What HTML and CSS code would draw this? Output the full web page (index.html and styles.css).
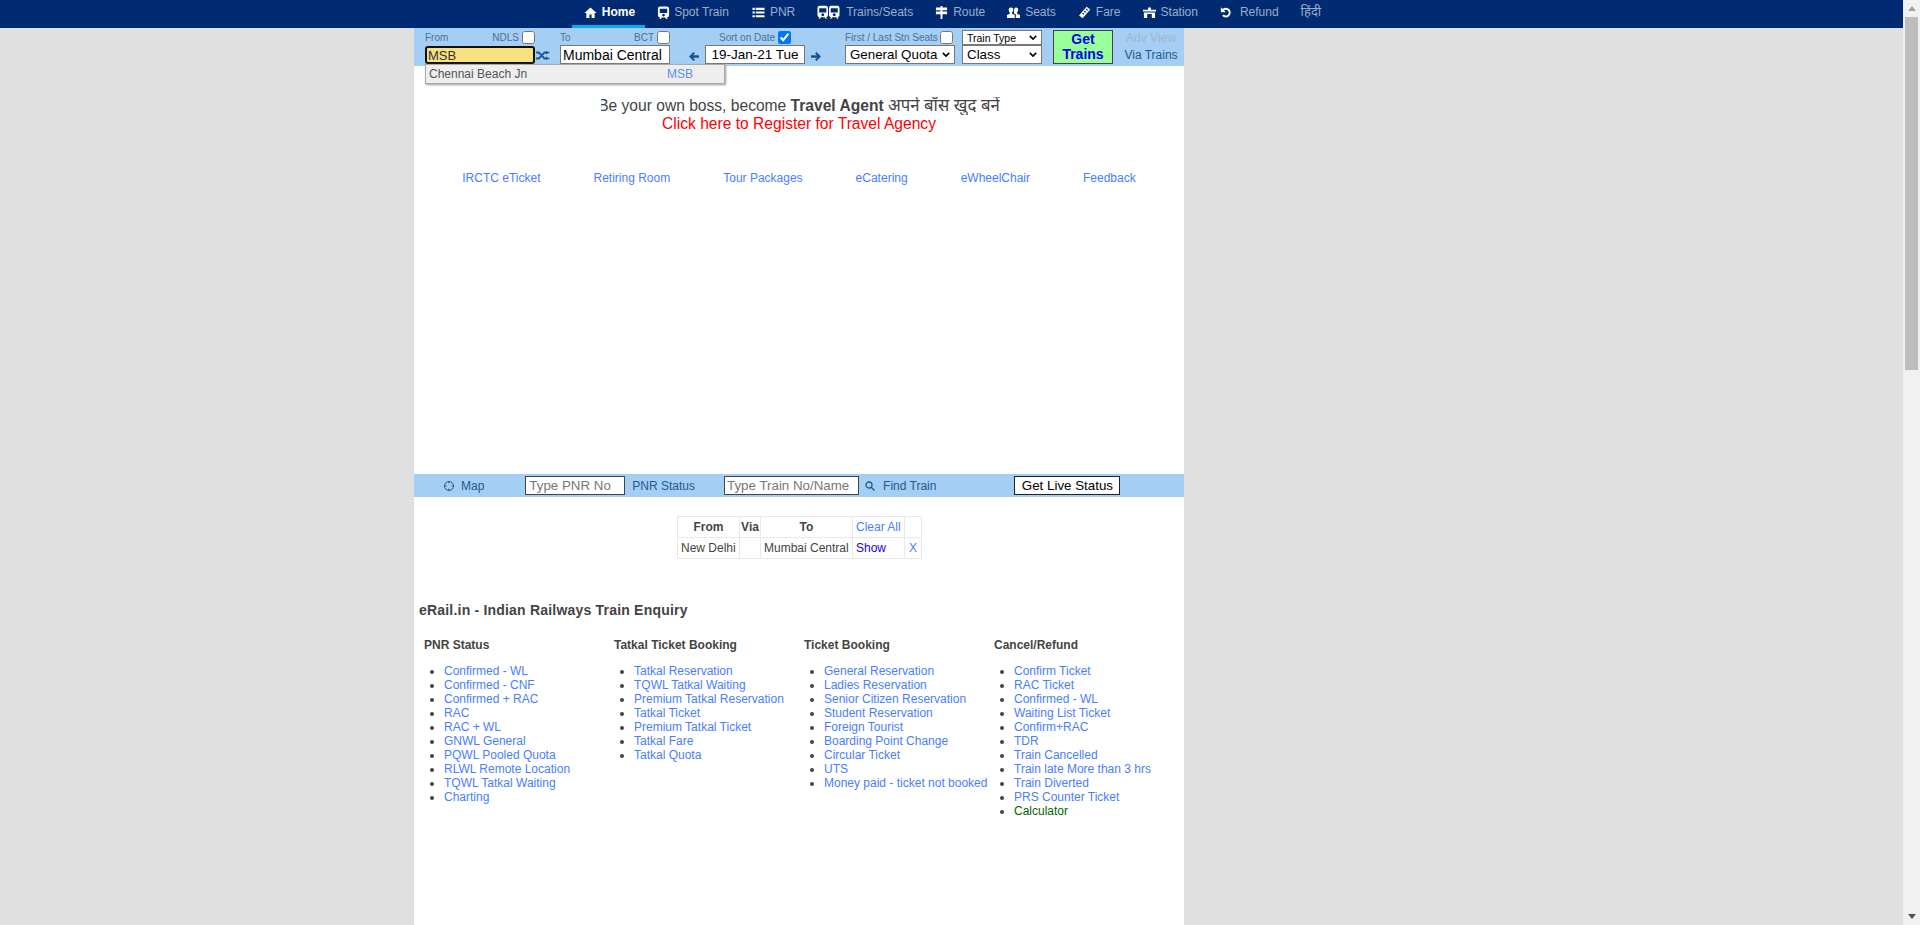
FILE: index.html
```html
<!DOCTYPE html>
<html lang="en">
<head>
<meta charset="utf-8">
<title>eRail.in - Indian Railways Train Enquiry</title>
<link rel="stylesheet" href="styles.css">
</head>
<body>
<nav class="topnav">
  <a class="nav-item active nav-home"><svg class="ic" viewBox="0 0 14 14"><path d="M7 1.500.5 7.500h2V13h3.300V9.200h2.400V13h3.300V7.500h2z"/></svg>Home</a>
  <a class="nav-item nav-spot"><svg class="ic" viewBox="0 0 14 14"><path fill-rule="evenodd" d="M3.500 .5h7A2.500 2.500 0 0 1 13 3v7a2.500 2.500 0 0 1-2.500 2.500l1 1.500H9.800l-1-1.500H5.200l-1 1.500H2.500l1-1.500A2.500 2.500 0 0 1 1 10V3A2.500 2.500 0 0 1 3.500 .5zM3 3v4.500h8V3zM7 8.300a1.500 1.500 0 1 0 .01 0z"/></svg>Spot Train</a>
  <a class="nav-item"><svg class="ic" viewBox="0 0 14 14"><path d="M.5 2h2.500v2.200H.5zM4 2h9.500v2.200H4zM.5 6h2.500v2.200H.5zM4 6h9.500v2.200H4zM.5 10h2.500v2.200H.5zM4 10h9.500v2.200H4z"/></svg>PNR</a>
  <a class="nav-item nav-wide"><svg class="ic-wide" viewBox="0 0 24 14"><path fill-rule="evenodd" d="M2.500 .5h7A2.500 2.500 0 0 1 11.500 3v7a2.500 2.500 0 0 1-2 2.500l1 1.500H9l-1-1.500H4L3 14H1.500l1-1.500a2.500 2.500 0 0 1-2-2.500V3A2.500 2.500 0 0 1 2.500 .5zM2.300 3v4.500h7.400V3zM6 8.300a1.500 1.500 0 1 0 .01 0z"/><path fill-rule="evenodd" d="M14.500 .5h7A2.500 2.500 0 0 1 23.500 3v7a2.500 2.500 0 0 1-2 2.500l1 1.500H21l-1-1.500h-4l-1 1.500h-1.500l1-1.500a2.500 2.500 0 0 1-2-2.500V3A2.500 2.500 0 0 1 14.500 .5zM14.300 3v4.500h7.400V3zM18 8.300a1.500 1.500 0 1 0 .01 0z"/></svg>Trains/Seats</a>
  <a class="nav-item"><svg class="ic" viewBox="0 0 14 14"><path d="M6 0h2v1.500h5v3H8V6h5v3H8v5H6V9H1V6h5V4.500H1v-3h5z"/></svg>Route</a>
  <a class="nav-item"><svg class="ic" viewBox="0 0 14 14"><path d="M4.500 1.500a2.200 2.200 0 0 1 2.200 2.400c0 1.400-.6 2.700-1.200 3.200v1.300l2.900 1.400v3.200H0v-3.200l3-1.400V7.100c-.7-.5-1.200-1.800-1.200-3.200a2.500 2.500 0 0 1 2.700-2.400zM9.800 1.500A2.200 2.200 0 0 1 12 3.900c0 1.400-.6 2.700-1.200 3.200v1.300l3.200 1.400v3.200H9.500v-4L7.500 8V6.800c.1-.8-.6-5.300 2.300-5.300z"/></svg>Seats</a>
  <a class="nav-item"><svg class="ic" viewBox="0 0 14 14"><path fill-rule="evenodd" d="M9.300 .8l3.900 3.100L5 13.200 1.100 10.100zM9.200 2.800 8.300 3.900l1.500 1.200.9-1.100zM7.300 5 6.400 6.100l1.500 1.200.9-1.100zM5.400 7.200 4.500 8.300l1.500 1.200.9-1.100z"/></svg>Fare</a>
  <a class="nav-item"><svg class="ic" viewBox="0 0 14 14"><path fill-rule="evenodd" d="M5.500 1.500h3V4H14v2H0V4h5.500zM1 7h12v6H9.500V8.500h-5V13H1z"/></svg>Station</a>
  <a class="nav-item nav-refund"><svg class="ic ic-refund" viewBox="0 0 14 14"><path d="M1 1.500V7.300h5.800L4.700 5.200a3.300 3.300 0 1 1-.3 4.800L2.500 11.400A5.700 5.700 0 1 0 2.900 3.400z"/></svg>Refund</a>
  <a class="nav-item nav-hindi">हिंदी</a>
</nav>

<main class="page">
  <form class="search-band">
    <div class="field field-from">
      <div class="field-top"><span>From</span><label class="check-label">NDLS<input type="checkbox"></label></div>
      <input class="text-input focused" type="text" value="MSB">
      <div class="suggest"><span>Chennai Beach Jn</span><span class="suggest-code">MSB</span></div>
    </div>
    <svg class="shuffle" viewBox="0 0 14 9"><path class="shuffle-line" d="M0 1.500h2.800l5.700 6h2.500M0 7.500h2.800l5.700-6h2.500"/><path d="M10 0 14 1.500 10 3.500zM10 5.500 14 7.500 10 9z"/></svg>
    <div class="field field-to">
      <div class="field-top"><span>To</span><label class="check-label">BCT<input type="checkbox"></label></div>
      <input class="text-input" type="text" value="Mumbai Central">
    </div>
    <svg class="arrow arrow-left" viewBox="0 0 10 9"><path d="M4.500 0 6 1.500 4 3.300h6v2.400H4L6 7.500 4.500 9 0 4.500z"/></svg>
    <div class="field field-date">
      <div class="field-top field-top-center"><span>Sort on Date</span><input type="checkbox" checked></div>
      <input class="text-input date-input" type="text" value="19-Jan-21 Tue">
    </div>
    <svg class="arrow arrow-right" viewBox="0 0 10 9"><path d="M5.500 0 4 1.500 6 3.300H0v2.400h6L4 7.500 5.500 9 10 4.500z"/></svg>
    <div class="field field-quota">
      <div class="field-top field-top-inset"><span>First / Last Stn Seats</span><input type="checkbox"></div>
      <div class="select-wrap"><select class="select big"><option>General Quota</option></select><svg class="chev" viewBox="0 0 10 6"><path d="M1 1l4 4 4-4" /></svg></div>
    </div>
    <div class="field field-type">
      <div class="select-wrap"><select class="select small"><option>Train Type</option></select><svg class="chev" viewBox="0 0 10 6"><path d="M1 1l4 4 4-4" /></svg></div>
      <div class="select-wrap"><select class="select big"><option>Class</option></select><svg class="chev" viewBox="0 0 10 6"><path d="M1 1l4 4 4-4" /></svg></div>
    </div>
    <button class="get-trains" type="button">Get Trains</button>
    <div class="side-links"><a class="adv">Adv View</a><a class="via">Via Trains</a></div>
  </form>

  <section class="promo">
    <div class="promo-line"><span class="promo-clip">Be your own boss, become <b>Travel Agent</b> <span class="hi">अपने बॉस खुद बनें</span></span></div>
    <a class="promo-reg">Click here to Register for Travel Agency</a>
  </section>

  <div class="quick-links">
    <a>IRCTC eTicket</a><a>Retiring Room</a><a>Tour Packages</a><a>eCatering</a><a>eWheelChair</a><a>Feedback</a>
  </div>

  <div class="status-band">
    <svg class="band-ic map-ic" viewBox="0 0 12 12"><circle cx="6" cy="6" r="4.500"/><path d="M6 1v2.500M6 8.500V11M1 6h2.500M8.500 6H11"/></svg>
    <a class="band-label map-label">Map</a>
    <input class="band-input pnr" type="text" placeholder="Type PNR No">
    <a class="band-label pnr-label">PNR Status</a>
    <input class="band-input trainbox" type="text" placeholder="Type Train No/Name">
    <svg class="band-ic search-ic" viewBox="0 0 10 10"><circle cx="4" cy="4" r="3"/><path d="M6.200 6.200 9.500 9.500"/></svg>
    <a class="band-label find-label">Find Train</a>
    <button class="live" type="button">Get Live Status</button>
  </div>

  <table class="recent">
    <tr><th class="c1">From</th><th class="c2">Via</th><th class="c3">To</th><td class="c4"><a class="lnk">Clear All</a></td><td class="c5"></td></tr>
    <tr><td>New Delhi</td><td></td><td>Mumbai Central</td><td><a class="show">Show</a></td><td class="x"><a class="lnk">X</a></td></tr>
  </table>

  <h1 class="title">eRail.in - Indian Railways Train Enquiry</h1>

  <div class="cols">
    <div class="col">
      <h2>PNR Status</h2>
      <ul>
        <li><a>Confirmed - WL</a></li><li><a>Confirmed - CNF</a></li><li><a>Confirmed + RAC</a></li><li><a>RAC</a></li><li><a>RAC + WL</a></li><li><a>GNWL General</a></li><li><a>PQWL Pooled Quota</a></li><li><a>RLWL Remote Location</a></li><li><a>TQWL Tatkal Waiting</a></li><li><a>Charting</a></li>
      </ul>
    </div>
    <div class="col">
      <h2>Tatkal Ticket Booking</h2>
      <ul>
        <li><a>Tatkal Reservation</a></li><li><a>TQWL Tatkal Waiting</a></li><li><a>Premium Tatkal Reservation</a></li><li><a>Tatkal Ticket</a></li><li><a>Premium Tatkal Ticket</a></li><li><a>Tatkal Fare</a></li><li><a>Tatkal Quota</a></li>
      </ul>
    </div>
    <div class="col">
      <h2>Ticket Booking</h2>
      <ul>
        <li><a>General Reservation</a></li><li><a>Ladies Reservation</a></li><li><a>Senior Citizen Reservation</a></li><li><a>Student Reservation</a></li><li><a>Foreign Tourist</a></li><li><a>Boarding Point Change</a></li><li><a>Circular Ticket</a></li><li><a>UTS</a></li><li><a>Money paid - ticket not booked</a></li>
      </ul>
    </div>
    <div class="col">
      <h2>Cancel/Refund</h2>
      <ul>
        <li><a>Confirm Ticket</a></li><li><a>RAC Ticket</a></li><li><a>Confirmed - WL</a></li><li><a>Waiting List Ticket</a></li><li><a>Confirm+RAC</a></li><li><a>TDR</a></li><li><a>Train Cancelled</a></li><li><a>Train late More than 3 hrs</a></li><li><a>Train Diverted</a></li><li><a>PRS Counter Ticket</a></li><li><a class="green">Calculator</a></li>
      </ul>
    </div>
  </div>
</main>

<aside class="scrollbar" aria-hidden="true">
  <div class="sb-btn"><span class="sb-up"></span></div>
  <div class="sb-track"><div class="sb-thumb"></div></div>
  <div class="sb-btn"><span class="sb-down"></span></div>
</aside>
</body>
</html>
```
FILE: styles.css
```css
* { box-sizing: border-box; }
body {
  margin: 0;
  padding-right: 17px;
  background: #e0e0e0;
  color: #444;
  font: 12px/14px "Liberation Sans", Arial, "Noto Sans", sans-serif;
}
a { cursor: pointer; }

/* drawn scrollbar */
.scrollbar {
  position: fixed;
  top: 0;
  right: 0;
  bottom: 0;
  z-index: 5;
  width: 17px;
  display: flex;
  flex-direction: column;
  background: #f1f1f1;
}
.sb-btn {
  flex: none;
  height: 17px;
  display: flex;
  align-items: center;
  justify-content: center;
}
.sb-up, .sb-down {
  width: 0;
  height: 0;
  border-left: 4px solid transparent;
  border-right: 4px solid transparent;
}
.sb-up { border-bottom: 5px solid #a3a3a3; }
.sb-down { border-top: 5px solid #505050; }
.sb-track { flex: 1; padding: 0 2px; }
.sb-thumb { height: 353px; background: #bdbdbd; }

/* top navigation */
.topnav {
  display: flex;
  justify-content: center;
  height: 28px;
  background: #002b73;
}
.nav-item {
  display: flex;
  align-items: center;
  height: 28px;
  padding: 0 10px 4px 12px;
  color: #9badca;
  white-space: nowrap;
}
.nav-item.active {
  color: #fff;
  font-weight: bold;
  border-bottom: 3px solid #00aeef;
  padding-bottom: 1px;
}
.nav-spot { padding-right: 11px; }
.nav-spot .ic { margin-right: 4px; }
.ic { width: 13px; height: 13px; margin-right: 5px; fill: #fff; flex: none; }
.ic-wide { width: 23px; height: 14px; margin-right: 6px; fill: #fff; flex: none; }
.ic-refund { width: 12px; height: 12px; margin-right: 8px; }
.nav-hindi { font-size: 13px; }

/* page column */
.page {
  width: 770px;
  min-height: 2335px;
  margin-left: 414px;
  background: #fff;
}

/* search band */
.search-band {
  display: flex;
  align-items: flex-start;
  height: 38px;
  padding: 2px 0 0 11px;
  background: #a4cef3;
}
.field { position: relative; display: flex; flex-direction: column; }
.field-top {
  display: flex;
  justify-content: space-between;
  align-items: center;
  height: 15px;
  font-size: 10px;
  line-height: 15px;
  color: #4f6f94;
  white-space: nowrap;
}
.field-top input, .check-label input {
  width: 13px;
  height: 13px;
  margin: 0;
  flex: none;
}
.check-label { display: flex; align-items: center; gap: 3px; }
.field-from { width: 110px; }
.field-to { width: 110px; margin-left: 10px; }
.field-date { width: 100px; margin-left: 6px; }
.field-top-center { padding: 0 14px; }
.field-top-inset { padding-right: 2px; }
.field-quota { width: 110px; margin-left: 24px; }
.field-type { width: 80px; margin-left: 7px; }
.text-input {
  width: 100%;
  height: 19px;
  padding: 0 2px;
  border: 1px solid #777;
  background: #fff;
  color: #000;
  font: 14px "Liberation Sans", Arial, sans-serif;
}
.text-input.focused {
  height: 18px;
  margin-top: 1px;
  border: 2px solid #111;
  border-radius: 3px;
  background: #f8e27e;
  padding: 0 1px;
  color: #333;
  font-size: 13px;
}
.date-input { text-align: center; padding: 0; font-size: 13.500px; }
.suggest {
  position: absolute;
  z-index: 2;
  top: 34px;
  left: 0;
  width: 300px;
  height: 20px;
  display: flex;
  align-items: center;
  padding: 0 3px;
  background: #eee;
  border: 1px solid #aaa;
  box-shadow: 1px 1px 2px #999;
  color: #555;
  white-space: nowrap;
}
.suggest-code { position: absolute; left: 241px; color: #5b8cf5; }
.shuffle { width: 14px; height: 9px; margin: 21px 0 0 1px; fill: #1d5a96; flex: none; }
.shuffle-line { fill: none; stroke: #1d5a96; stroke-width: 2; }
.arrow { width: 10px; height: 9px; margin-top: 22px; fill: #14568f; flex: none; }
.arrow-left { margin-left: 19px; }
.arrow-right { margin-left: 6px; }
.select-wrap { position: relative; }
.select {
  display: block;
  width: 100%;
  appearance: none;
  -webkit-appearance: none;
  background: #fff;
  border: 1px solid #777;
  border-radius: 0;
  color: #000;
  font-family: "Liberation Sans", Arial, sans-serif;
  padding: 0 0 0 4px;
}
.select.big { height: 19px; font-size: 13.333px; }
.select.small { height: 15px; font-size: 10.500px; }
.chev {
  position: absolute;
  right: 5px;
  top: 50%;
  width: 8px;
  height: 5px;
  margin-top: -3px;
  fill: none;
  stroke: #000;
  stroke-width: 2;
}
.get-trains {
  width: 60px;
  height: 34px;
  margin: 0 0 0 11px;
  padding: 0 8px;
  background: #99ff99;
  border: 1px solid #444;
  color: #0000ee;
  font: bold 14px/15px "Liberation Sans", Arial, sans-serif;
}
.side-links {
  display: flex;
  flex-direction: column;
  align-items: center;
  gap: 3px;
  margin: 1px 0 0 12px;
  width: 52px;
  white-space: nowrap;
}
.adv { color: #9fb6cc; }
.via { color: #205a90; }

/* promo */
.promo {
  height: 105px;
  padding-top: 31px;
  text-align: center;
  font-size: 15.600px;
  line-height: 18px;
}
.promo-line { display: block; }
.promo-clip { display: inline-block; clip-path: inset(0 0 0 3px); }
.hi { font-size: 16.700px; }
.promo-reg { display: block; color: #f00; }

.quick-links {
  display: flex;
  justify-content: center;
  gap: 53px;
  height: 303px;
  color: #4a7dff;
}

/* status band */
.status-band {
  display: flex;
  align-items: center;
  height: 23px;
  padding-left: 29px;
  background: #a4cef3;
  color: #205a90;
}
.band-ic { fill: none; stroke: #1d5a96; stroke-width: 1; flex: none; }
.map-ic { width: 12px; height: 12px; }
.search-ic { width: 10px; height: 10px; margin-left: 6px; stroke-width: 1.300; }
.band-label { padding-top: 1px; white-space: nowrap; }
.map-label { margin-left: 6px; padding-top: 0; }
.pnr-label { margin-left: 7px; }
.find-label { margin-left: 8px; }
.band-input {
  height: 19px;
  border: 1px solid #444;
  background: #fff;
  padding: 0 3px;
  font: 13.333px "Liberation Sans", Arial, sans-serif;
}
.band-input::placeholder { color: #777; opacity: 1; }
.pnr { width: 100px; margin-left: 41px; }
.trainbox { width: 135px; margin-left: 29px; padding: 0 2px; }
.live {
  width: 106px;
  height: 19px;
  margin-left: 78px;
  padding: 0;
  background: #fff;
  border: 1px solid #222;
  color: #000;
  font: 13.333px "Liberation Sans", Arial, sans-serif;
  white-space: nowrap;
}

/* recent table */
.recent {
  border-collapse: collapse;
  margin: 19px 0 0 263px;
  table-layout: fixed;
  width: 244px;
}
.recent th, .recent td {
  height: 21px;
  border: 1px solid #e8e8e8;
  padding: 0 3px;
  white-space: nowrap;
  font-size: 12px;
}
.recent th { text-align: center; font-weight: bold; }
.recent th.c2 { padding: 0; }
.c1 { width: 62px; }
.c2 { width: 21px; }
.c3 { width: 92px; }
.c4 { width: 52px; }
.c5 { width: 17px; }
.x { text-align: center; }
.lnk { color: #4a7dff; }
.show { color: #1a00ee; }

/* link columns */
.title {
  margin: 43px 0 0 5px;
  font-size: 14px;
  line-height: 16px;
  letter-spacing: .2px;
  font-weight: bold;
  color: #444;
}
.cols {
  display: grid;
  grid-template-columns: repeat(4, 190px);
  padding: 20px 0 0 10px;
}
.col h2 {
  margin: 0;
  font-size: 12px;
  line-height: 14px;
  font-weight: bold;
  color: #444;
}
.col ul {
  margin: 12px 0 0;
  padding-left: 20px;
  white-space: nowrap;
}
.col li a { color: #4a7dff; }
.col li a.green { color: #060; }
```
